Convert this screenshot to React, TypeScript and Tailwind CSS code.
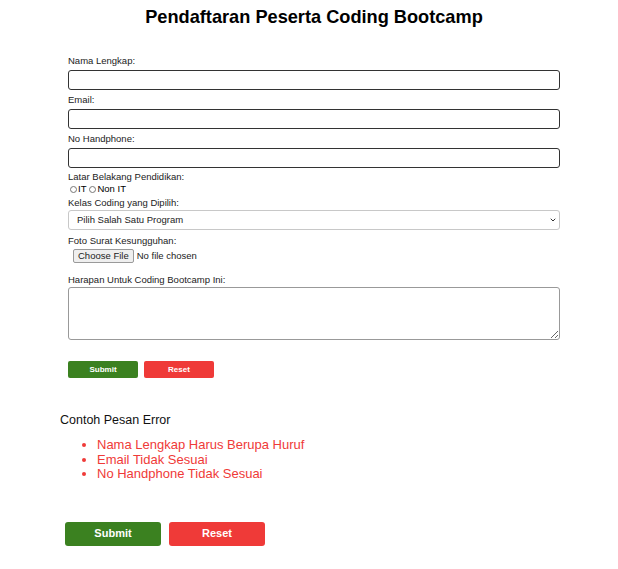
import { ChevronDown } from "lucide-react";

const labelCls =
  "block text-[9.5px] leading-[12px] text-[#222] font-['Liberation_Sans',Arial,sans-serif]";
const inputCls =
  "block w-full h-[20px] border border-[#333] rounded-[3px] bg-white";

export default function App() {
  const errors = [
    "Nama Lengkap Harus Berupa Huruf",
    "Email Tidak Sesuai",
    "No Handphone Tidak Sesuai",
  ];

  return (
    <div className="w-[618px] h-[569px] bg-white font-['Liberation_Sans',Arial,sans-serif] text-black">
      <h1 className="pt-[6px] pl-[10px] text-center text-[18.2px] leading-[22px] font-bold">
        Pendaftaran Peserta Coding Bootcamp
      </h1>

      <form className="ml-[68px] w-[492px] mt-[27px]">
        <label className={labelCls}>Nama Lengkap:</label>
        <input type="text" className={`${inputCls} mt-[3px]`} />

        <label className={`${labelCls} mt-[4px]`}>Email:</label>
        <input type="text" className={`${inputCls} mt-[3px]`} />

        <label className={`${labelCls} mt-[4px]`}>No Handphone:</label>
        <input type="text" className={`${inputCls} mt-[3px]`} />

        <label className={`${labelCls} mt-[3px]`}>
          Latar Belakang Pendidikan:
        </label>
        <div className="flex items-center text-[9.5px] leading-[12px] ml-[2px]">
          <input type="radio" name="edu" className="w-[7px] h-[7px] m-0" />
          <span className="ml-[1px]">IT</span>
          <input type="radio" name="edu" className="w-[7px] h-[7px] m-0 ml-[3px]" />
          <span className="ml-[1px]">Non IT</span>
        </div>

        <label className={`${labelCls} mt-[2px]`}>Kelas Coding yang Dipilih:</label>
        <div className="relative mt-[1px]">
          <select className="block w-full h-[20px] appearance-none border border-[#c8c8c8] rounded-[3px] bg-white pl-[8px] text-[9.5px] text-[#222]">
            <option>Pilih Salah Satu Program</option>
          </select>
          <ChevronDown
            className="absolute right-[3px] top-[6px] w-[8px] h-[8px] text-[#333] pointer-events-none"
            strokeWidth={3}
          />
        </div>

        <label className={`${labelCls} mt-[5px]`}>Foto Surat Kesungguhan:</label>
        <input
          type="file"
          className="block mt-[2px] ml-[5px] text-[9.5px] leading-[12px] text-[#222] file:border file:border-[#9a9a9a] file:bg-[#efefef] file:rounded-[2px] file:px-[4px] file:mr-[3px] file:text-[#222]"
        />

        <label className={`${labelCls} mt-[11px]`}>
          Harapan Untuk Coding Bootcamp Ini:
        </label>
        <textarea className="block w-full h-[53px] mt-[1px] border border-[#999] rounded-[3px] bg-white resize-y" />

        <div className="flex gap-[6px] mt-[21px]">
          <button
            type="button"
            className="w-[70px] h-[17px] rounded-[2px] bg-[#3b8120] text-white text-[8px] font-bold"
          >
            Submit
          </button>
          <button
            type="button"
            className="w-[70px] h-[17px] rounded-[2px] bg-[#ef3a38] text-white text-[8px] font-bold"
          >
            Reset
          </button>
        </div>
      </form>

      <div className="ml-[60px] mt-[34px]">
        <p className="text-[12.5px] leading-[16px] text-[#111]">
          Contoh Pesan Error
        </p>
        <ul className="list-disc ml-[37px] mt-[10px] text-[13px] leading-[14.5px] text-[#ef3a38]">
          {errors.map((e) => (
            <li key={e}>{e}</li>
          ))}
        </ul>
      </div>

      <div className="flex gap-[8px] ml-[65px] mt-[40px]">
        <button
          type="button"
          className="w-[96px] h-[24px] rounded-[3px] bg-[#3b8120] text-white text-[11px] font-bold"
        >
          Submit
        </button>
        <button
          type="button"
          className="w-[96px] h-[24px] rounded-[3px] bg-[#ef3a38] text-white text-[11px] font-bold"
        >
          Reset
        </button>
      </div>
    </div>
  );
}
